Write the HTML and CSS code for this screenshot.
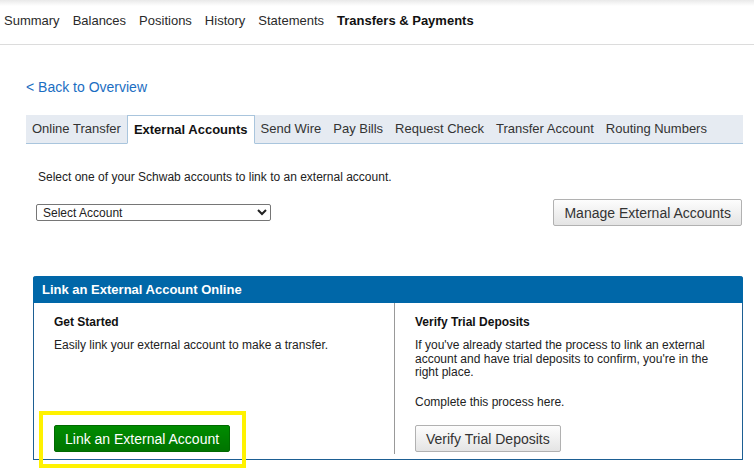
FILE: index.html
```html
<!DOCTYPE html>
<html lang="en">
<head>
    <meta charset="UTF-8">
    <title>Transfers &amp; Payments</title>
    <link rel="stylesheet" href="styles.css">
</head>
<body>
    <div class="topnav">
        <a href="javascript:;">Summary</a>
        <a href="javascript:;">Balances</a>
        <a href="javascript:;">Positions</a>
        <a href="javascript:;">History</a>
        <a href="javascript:;">Statements</a>
        <a href="javascript:;" class="current">Transfers &amp; Payments</a>
    </div>
    <div class="main">
        <a class="back" href="javascript:;">&lt; Back to Overview</a>
        <ul class="tabs">
            <li>Online Transfer</li>
            <li class="active">External Accounts</li>
            <li>Send Wire</li>
            <li>Pay Bills</li>
            <li>Request Check</li>
            <li>Transfer Account</li>
            <li>Routing Numbers</li>
        </ul>
        <p class="intro">Select one of your Schwab accounts to link to an external account.</p>
        <div class="select-row">
            <select class="account">
                <option>Select Account</option>
            </select>
            <button class="btn">Manage External Accounts</button>
        </div>
        <div class="panel">
            <div class="panel-head">Link an External Account Online</div>
            <div class="panel-body">
                <div class="col col-left">
                    <h4>Get Started</h4>
                    <p>Easily link your external account to make a transfer.</p>
                    <div class="col-foot">
                        <button class="btn-green">Link an External Account</button>
                    </div>
                </div>
                <div class="col">
                    <h4>Verify Trial Deposits</h4>
                    <p>If you've already started the process to link an external account and have trial deposits to confirm, you're in the right place.</p>
                    <p>Complete this process here.</p>
                    <div class="col-foot">
                        <button class="btn">Verify Trial Deposits</button>
                    </div>
                </div>
            </div>
        </div>
    </div>
</body>
</html>
```

FILE: styles.css
```css
body,ul,li,p,h4{
    margin: 0;
    padding: 0;
}
body{
    font-family: "Liberation Sans", Arial, sans-serif;
    color: #222;
    background: #fff;
}
.topnav{
    height: 40px;
    display: flex;
    align-items: center;
    gap: 13px;
    padding: 0 4px 4px;
    border-bottom: 1px solid #dcdcdc;
    background: linear-gradient(#e9e9e9, #fff 6px);
    font-size: 13px;
}
.topnav a{
    color: #2a2a2a;
    text-decoration: none;
}
.topnav a.current{
    font-weight: bold;
    color: #111;
}
.main{
    padding: 0 11px 30px 26px;
}
.back{
    display: block;
    margin-top: 34px;
    font-size: 14px;
    line-height: 16px;
    color: #1b6ec2;
    text-decoration: none;
}
.tabs{
    list-style: none;
    display: flex;
    margin-top: 20px;
    height: 28px;
    background: #e6ebf2;
    border-bottom: 1px solid #a9c5dd;
    font-size: 13px;
    color: #333;
}
.tabs li{
    padding: 0 6px;
    line-height: 28px;
}
.tabs li.active{
    background: #fff;
    border: 1px solid #a9c5dd;
    border-bottom-color: #fff;
    margin-bottom: -1px;
    font-weight: bold;
    color: #111;
}
.intro{
    margin-top: 26px;
    padding-left: 12px;
    font-size: 12px;
    line-height: 14px;
}
.select-row{
    display: flex;
    justify-content: space-between;
    align-items: center;
    margin-top: 15px;
    padding: 0 1px 0 10px;
}
.account{
    width: 235px;
    height: 17px;
    padding: 0 2px;
    font-family: inherit;
    font-size: 12px;
    color: #222;
    border: 1px solid #767676;
    border-radius: 2px;
    background: #fff;
}
.btn{
    height: 27px;
    padding: 0 10px;
    font-family: inherit;
    font-size: 14px;
    color: #333;
    background: linear-gradient(#fdfdfd, #e4e4e4);
    border: 1px solid #b1b1b1;
    border-radius: 2px;
}
.panel{
    margin: 50px 0 0 7px;
    border: 1px solid #1d5f93;
    border-top: 0;
    border-radius: 3px 3px 0 0;
}
.panel-head{
    height: 27px;
    line-height: 27px;
    margin: 0 -1px;
    padding-left: 9px;
    background: #0067a8;
    color: #fff;
    font-size: 13px;
    font-weight: bold;
    border-radius: 3px 3px 0 0;
}
.panel-body{
    display: grid;
    grid-template-columns: 361px 1fr;
    padding-bottom: 5px;
    font-size: 12px;
}
.col{
    display: flex;
    flex-direction: column;
    padding: 12px 20px 2px 20px;
}
.col-left{
    border-right: 1px solid #999;
}
.col h4{
    font-size: 12px;
    line-height: 14px;
    font-weight: bold;
    color: #111;
}
.col p{
    margin-top: 10px;
    line-height: 13.6px;
}
.col p + p{
    margin-top: 16px;
}
.col-foot{
    margin-top: auto;
    padding-top: 16px;
}
.btn-green{
    position: relative;
    height: 27px;
    padding: 0 10px;
    font-family: inherit;
    font-size: 14px;
    color: #fff;
    background: linear-gradient(#008c00, #007400);
    border: 1px solid #006a00;
    border-radius: 2px;
}
/* highlight ring drawn over the button */
.btn-green::after{
    content: "";
    position: absolute;
    top: -15px;
    left: -16px;
    right: -17px;
    bottom: -17px;
    border: 4px solid #fff200;
}
```
